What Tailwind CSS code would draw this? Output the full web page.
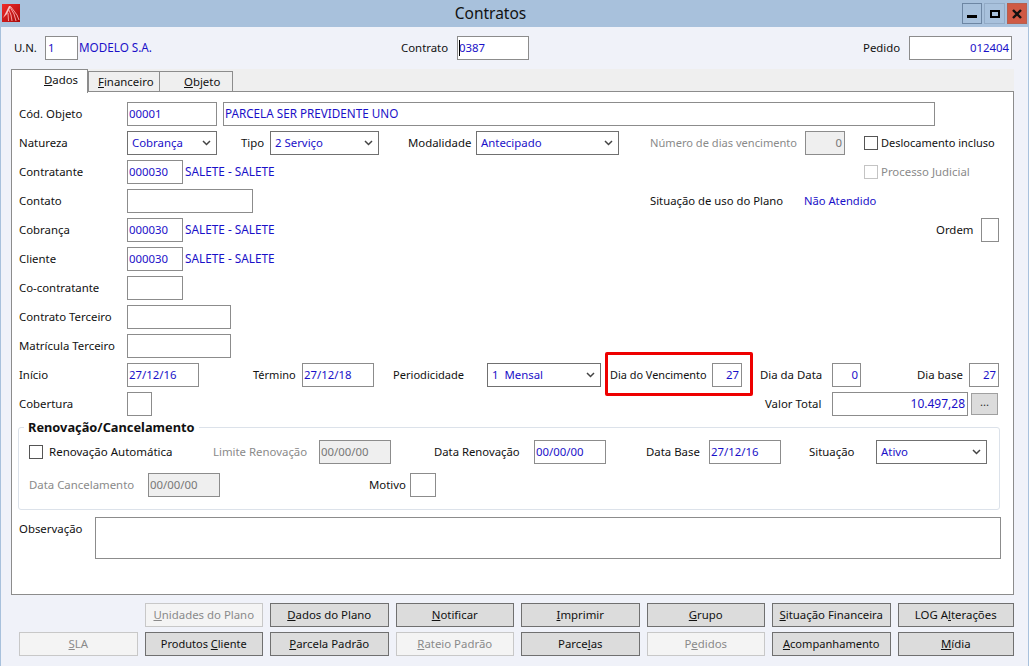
<!DOCTYPE html>
<html lang="pt">
<head>
  <meta charset="UTF-8">
  <title>Contratos</title>
  <script src="https://cdn.jsdelivr.net/npm/@tailwindcss/browser@4"></script>
</head>
<body class="bg-white font-['Noto_Sans',sans-serif] text-[11.4px] text-[#111] whitespace-nowrap overflow-hidden">
 <div class="w-[1029px] h-[666px] overflow-hidden bg-[#f0f2f9] shadow-[inset_1px_0_0_#a8c1dc,inset_-1px_0_0_#a8c1dc]">
  <!-- Barra de titulo -->
  <div class="relative flex items-center justify-center h-[27px] pr-[48px] bg-[#a8c1dc] text-[15.5px] text-[#111]">
    <svg class="absolute left-[2px] top-[4px] w-[18px] h-[18px]" viewBox="0 0 18 18">
      <defs>
        <linearGradient id="logo" x1="0" y1="0" x2="1" y2="1">
          <stop offset="0" stop-color="#f02a2a"/>
          <stop offset="1" stop-color="#a80a0a"/>
        </linearGradient>
      </defs>
      <rect width="18" height="18" fill="url(#logo)"/>
      <path d="M1 14 L7 2 L9 2 L5 10 Z" fill="#f9c4c4"/>
      <path d="M8 3 L12 10 L14 17 M7 6 L9 11 L10 17 M6 9 L6.5 17 M9 3 L15 11 L17 16" fill="none" stroke="#f9b0b0" stroke-width="0.9"/>
    </svg>
    <span>Contratos</span>
    <div class="absolute left-[962px] top-[3px] flex gap-[2px]">
      <div class="flex items-end justify-center w-[20px] h-[21px] pb-[5px] bg-[#a8c1dc] border border-[#6d86a3]"><div class="w-[10px] h-[3px] bg-black"></div></div>
      <div class="flex items-center justify-center w-[21px] h-[21px] bg-[#a8c1dc] border border-[#93abc6]"><div class="w-[10px] h-[8px] border-2 border-black"></div></div>
      <div class="flex items-center justify-center w-[20px] h-[21px] bg-[#cf5a45] border border-[#b5604f]">
        <svg class="w-[10px] h-[10px]" viewBox="0 0 10 10"><path d="M1 1 L9 9 M9 1 L1 9" stroke="#111" stroke-width="2.4"/></svg>
      </div>
    </div>
  </div>

  <!-- Cabecalho -->
  <div class="flex items-center h-[24px] mt-[9px] pl-[14px]">
    <span class="w-[31px]">U.N.</span>
    <div class="flex items-center w-[33px] h-[24px] px-[2px] bg-white border border-[#8c8c8c] text-[#1a10c8]">1</div>
    <span class="ml-[1px] w-[322px] text-[11.7px] text-[#1a10c8]">MODELO S.A.</span>
    <span class="w-[56px]">Contrato</span>
    <div class="relative flex items-center w-[72px] h-[24px] px-[1px] bg-white border border-[#8c8c8c] text-[#1a10c8]">0387<div class="absolute left-[1px] top-[3px] w-[1px] h-[16px] bg-black"></div></div>
    <span class="ml-[334px] w-[46px]">Pedido</span>
    <div class="flex items-center justify-end w-[103px] h-[24px] px-[2px] bg-white border border-[#8c8c8c] text-[#1a10c8]">012404</div>
  </div>

  <!-- Abas -->
  <div class="flex items-end h-[23px] mt-[9px] ml-[11px] w-[1003px] bg-[#efefef]">
    <div class="relative z-10 w-[77px] h-[24px] -mb-[1px] pt-[1px] pl-[32px] bg-white border border-b-0 border-[#8c8c8c]"><span><u>D</u>ados</span></div>
    <div class="flex items-center pl-[9px] w-[72px] h-[21px] bg-[#efefef] border border-[#8c8c8c]"><span><u>F</u>inanceiro</span></div>
    <div class="flex items-center pl-[24px] w-[73px] h-[21px] bg-[#efefef] border border-l-0 border-[#8c8c8c]"><span><u>O</u>bjeto</span></div>
    <div class="flex-1 h-[1px] bg-[#8c8c8c]"></div>
  </div>

  <!-- Painel Dados -->
  <div class="ml-[11px] w-[1003px] h-[503px] pt-[10px] pl-[7px] bg-white border border-t-0 border-[#8c8c8c]">
    <div class="flex flex-col gap-[5px]">
      <div class="flex items-center h-[24px]">
        <span class="w-[108px]">Cód. Objeto</span>
        <div class="flex items-center w-[90px] h-[24px] px-[1px] border border-[#8c8c8c] text-[#1a10c8]">00001</div>
        <div class="flex items-center ml-[6px] w-[712px] h-[24px] px-[1px] border border-[#8c8c8c] text-[11.7px] text-[#1a10c8]">PARCELA SER PREVIDENTE UNO</div>
      </div>
      <div class="flex items-center h-[24px]">
        <span class="w-[108px]">Natureza</span>
        <div class="flex items-center justify-between w-[90px] h-[24px] pl-[4px] pr-[5px] border border-[#707070] text-[#1a10c8]"><span>Cobrança</span><svg class="w-[9px] h-[6px]" viewBox="0 0 9 6"><path d="M1 1 L4.5 4.5 L8 1" fill="none" stroke="#444" stroke-width="1.5"/></svg></div>
        <span class="ml-[24px] w-[29px]">Tipo</span>
        <div class="flex items-center justify-between w-[109px] h-[24px] pl-[4px] pr-[5px] border border-[#707070] text-[#1a10c8]"><span>2 Serviço</span><svg class="w-[9px] h-[6px]" viewBox="0 0 9 6"><path d="M1 1 L4.5 4.5 L8 1" fill="none" stroke="#444" stroke-width="1.5"/></svg></div>
        <span class="ml-[29px] w-[68px]">Modalidade</span>
        <div class="flex items-center justify-between w-[143px] h-[24px] pl-[4px] pr-[5px] border border-[#707070] text-[#1a10c8]"><span>Antecipado</span><svg class="w-[9px] h-[6px]" viewBox="0 0 9 6"><path d="M1 1 L4.5 4.5 L8 1" fill="none" stroke="#444" stroke-width="1.5"/></svg></div>
        <span class="ml-[31px] w-[155px] text-[11.1px] text-[#8a8a8a]">Número de dias vencimento</span>
        <div class="flex items-center justify-end w-[40px] h-[24px] px-[2px] bg-[#efefef] border border-[#8c8c8c] text-[#777]">0</div>
        <div class="ml-[19px] w-[14px] h-[14px] border border-[#555]"></div>
        <span class="ml-[3px] text-[11px]">Deslocamento incluso</span>
      </div>
      <div class="flex items-center h-[24px]">
        <span class="w-[108px]">Contratante</span>
        <div class="flex items-center w-[56px] h-[24px] px-[1px] border border-[#8c8c8c] text-[#1a10c8]">000030</div>
        <span class="ml-[2px] w-[679px] text-[11.8px] text-[#1a10c8]">SALETE - SALETE</span>
        <div class="w-[14px] h-[14px] border border-[#c4c4c4]"></div>
        <span class="ml-[3px] text-[#8a8a8a]">Processo Judicial</span>
      </div>
      <div class="flex items-center h-[24px]">
        <span class="w-[108px]">Contato</span>
        <div class="w-[126px] h-[24px] border border-[#8c8c8c]"></div>
        <span class="ml-[397px] w-[154px] text-[11.3px]">Situação de uso do Plano</span>
        <span class="text-[11.2px] text-[#1a10c8]">Não Atendido</span>
      </div>
      <div class="flex items-center h-[24px]">
        <span class="w-[108px]">Cobrança</span>
        <div class="flex items-center w-[56px] h-[24px] px-[1px] border border-[#8c8c8c] text-[#1a10c8]">000030</div>
        <span class="ml-[2px] w-[751px] text-[11.8px] text-[#1a10c8]">SALETE - SALETE</span>
        <span class="w-[45px]">Ordem</span>
        <div class="w-[18px] h-[24px] border border-[#8c8c8c]"></div>
      </div>
      <div class="flex items-center h-[24px]">
        <span class="w-[108px]">Cliente</span>
        <div class="flex items-center w-[56px] h-[24px] px-[1px] border border-[#8c8c8c] text-[#1a10c8]">000030</div>
        <span class="ml-[2px] text-[11.8px] text-[#1a10c8]">SALETE - SALETE</span>
      </div>
      <div class="flex items-center h-[24px]">
        <span class="w-[108px]">Co-contratante</span>
        <div class="w-[56px] h-[24px] border border-[#8c8c8c]"></div>
      </div>
      <div class="flex items-center h-[24px]">
        <span class="w-[108px]">Contrato Terceiro</span>
        <div class="w-[104px] h-[24px] border border-[#8c8c8c]"></div>
      </div>
      <div class="flex items-center h-[24px]">
        <span class="w-[108px]">Matrícula Terceiro</span>
        <div class="w-[104px] h-[24px] border border-[#8c8c8c]"></div>
      </div>
      <div class="relative flex items-center h-[24px]">
        <span class="w-[108px]">Início</span>
        <div class="flex items-center w-[72px] h-[24px] px-[1px] border border-[#8c8c8c] text-[#1a10c8]">27/12/16</div>
        <span class="ml-[54px] w-[49px] text-[11px]">Término</span>
        <div class="flex items-center w-[72px] h-[24px] px-[1px] border border-[#8c8c8c] text-[#1a10c8]">27/12/18</div>
        <span class="ml-[19px] w-[94px] text-[11.1px]">Periodicidade</span>
        <div class="flex items-center justify-between w-[114px] h-[24px] pl-[4px] pr-[5px] border border-[#707070] text-[#1a10c8]"><span>1&nbsp; Mensal</span><svg class="w-[9px] h-[6px]" viewBox="0 0 9 6"><path d="M1 1 L4.5 4.5 L8 1" fill="none" stroke="#444" stroke-width="1.5"/></svg></div>
        <span class="ml-[9px] w-[102px] text-[10.9px]">Dia do Vencimento</span>
        <div class="flex items-center justify-end w-[30px] h-[24px] px-[2px] border border-[#8c8c8c] text-[#1a10c8]">27</div>
        <span class="ml-[18px] w-[72px]">Dia da Data</span>
        <div class="flex items-center justify-end w-[29px] h-[24px] px-[2px] border border-[#8c8c8c] text-[#1a10c8]">0</div>
        <span class="ml-[56px] w-[52px]">Dia base</span>
        <div class="flex items-center justify-end w-[30px] h-[24px] px-[2px] border border-[#8c8c8c] text-[#1a10c8]">27</div>
        <!-- Destaque vermelho -->
        <div class="absolute left-[586px] top-[-11px] w-[148px] h-[44px] border-[3px] border-[#ee0000] rounded-[2px]"></div>
      </div>
      <div class="flex items-center h-[24px]">
        <span class="w-[108px]">Cobertura</span>
        <div class="w-[25px] h-[24px] border border-[#8c8c8c]"></div>
        <span class="ml-[613px] w-[67px]">Valor Total</span>
        <div class="flex items-center justify-end w-[136px] h-[24px] px-[2px] border border-[#8c8c8c] text-[12px] text-[#1a10c8]">10.497,28</div>
        <div class="flex items-start justify-center ml-[3px] w-[27px] h-[22px] bg-[#dcdcdc] border border-[#a0a0a0] text-[#333] leading-[16px]">...</div>
      </div>
    </div>

    <!-- Renovacao/Cancelamento -->
    <div class="relative mt-[11px] -ml-[1px] w-[982px] h-[83px] pt-[12px] pl-[10px] border border-[#dce2ea] rounded-[3px]">
      <span class="absolute left-[5px] top-[-9px] px-[4px] bg-white font-bold text-[12.8px] leading-[17px]">Renovação/Cancelamento</span>
      <div class="flex items-center h-[24px]">
        <div class="w-[14px] h-[14px] border border-[#555]"></div>
        <span class="ml-[6px] w-[164px] text-[11.5px]">Renovação Automática</span>
        <span class="w-[106px] text-[#8a8a8a]">Limite Renovação</span>
        <div class="flex items-center w-[72px] h-[24px] px-[1px] bg-[#efefef] border border-[#8c8c8c] text-[#777]">00/00/00</div>
        <span class="ml-[43px] w-[100px] text-[11.3px]">Data Renovação</span>
        <div class="flex items-center w-[72px] h-[24px] px-[1px] border border-[#8c8c8c] text-[#1a10c8]">00/00/00</div>
        <span class="ml-[40px] w-[63px]">Data Base</span>
        <div class="flex items-center w-[72px] h-[24px] px-[1px] border border-[#8c8c8c] text-[#1a10c8]">27/12/16</div>
        <span class="ml-[28px] w-[67px]">Situação</span>
        <div class="flex items-center justify-between w-[111px] h-[24px] pl-[4px] pr-[5px] border border-[#707070] text-[#1a10c8]"><span>Ativo</span><svg class="w-[9px] h-[6px]" viewBox="0 0 9 6"><path d="M1 1 L4.5 4.5 L8 1" fill="none" stroke="#444" stroke-width="1.5"/></svg></div>
      </div>
      <div class="flex items-center h-[24px] mt-[9px]">
        <span class="w-[119px] text-[#8a8a8a]">Data Cancelamento</span>
        <div class="flex items-center w-[72px] h-[24px] px-[1px] bg-[#efefef] border border-[#8c8c8c] text-[#777]">00/00/00</div>
        <span class="ml-[149px] w-[41px]">Motivo</span>
        <div class="w-[26px] h-[24px] border border-[#8c8c8c]"></div>
      </div>
    </div>

    <div class="flex mt-[7px]">
      <span class="w-[76px] mt-[3px]">Observação</span>
      <div class="w-[906px] h-[42px] border border-[#8c8c8c]"></div>
    </div>
  </div>

  <!-- Botoes -->
  <div class="grid grid-cols-[repeat(7,118.5px)_116.5px] gap-x-[7px] gap-y-[5px] mt-[8px] ml-[19px]">
    <div></div>
    <div class="flex items-center justify-center h-[24px] bg-[#f4f4f4] border border-[#c8c8c8] text-[#8a8a8a]"><span><u>U</u>nidades do Plano</span></div>
    <div class="flex items-center justify-center h-[24px] bg-[#dcdcdc] border border-[#707070]"><span><u>D</u>ados do Plano</span></div>
    <div class="flex items-center justify-center h-[24px] bg-[#dcdcdc] border border-[#707070]"><span><u>N</u>otificar</span></div>
    <div class="flex items-center justify-center h-[24px] bg-[#dcdcdc] border border-[#707070]"><span><u>I</u>mprimir</span></div>
    <div class="flex items-center justify-center h-[24px] bg-[#dcdcdc] border border-[#707070]"><span><u>G</u>rupo</span></div>
    <div class="flex items-center justify-center h-[24px] bg-[#dcdcdc] border border-[#707070]"><span><u>S</u>ituação Financeira</span></div>
    <div class="flex items-center justify-center h-[24px] bg-[#dcdcdc] border border-[#707070]"><span>LOG A<u>l</u>terações</span></div>
    <div class="flex items-center justify-center h-[24px] bg-[#f4f4f4] border border-[#c8c8c8] text-[#8a8a8a]"><span><u>S</u>LA</span></div>
    <div class="flex items-center justify-center h-[24px] bg-[#dcdcdc] border border-[#707070] text-[11px]"><span>Produtos <u>C</u>liente</span></div>
    <div class="flex items-center justify-center h-[24px] bg-[#dcdcdc] border border-[#707070]"><span><u>P</u>arcela Padrão</span></div>
    <div class="flex items-center justify-center h-[24px] bg-[#f4f4f4] border border-[#c8c8c8] text-[#8a8a8a]"><span><u>R</u>ateio Padrão</span></div>
    <div class="flex items-center justify-center h-[24px] bg-[#dcdcdc] border border-[#707070]"><span>Parce<u>l</u>as</span></div>
    <div class="flex items-center justify-center h-[24px] bg-[#f4f4f4] border border-[#c8c8c8] text-[#8a8a8a]"><span>P<u>e</u>didos</span></div>
    <div class="flex items-center justify-center h-[24px] bg-[#dcdcdc] border border-[#707070] text-[11.1px]"><span><u>A</u>companhamento</span></div>
    <div class="flex items-center justify-center h-[24px] bg-[#dcdcdc] border border-[#707070]"><span><u>M</u>ídia</span></div>
  </div>
 </div>
</body>
</html>
